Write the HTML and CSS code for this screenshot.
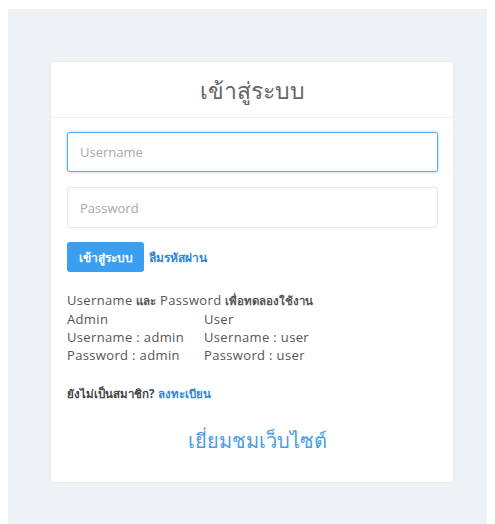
FILE: index.html
```html
<!DOCTYPE html>
<html lang="th">
<head>
<meta charset="utf-8">
<title>เข้าสู่ระบบ</title>
<link rel="stylesheet" href="styles.css">
</head>
<body>
<div class="page">
  <div class="card">
    <div class="card-header">เข้าสู่ระบบ</div>
    <div class="card-body">
      <input class="field focused" type="text" placeholder="Username">
      <input class="field" type="password" placeholder="Password">
      <div class="actions">
        <button class="btn" type="button">เข้าสู่ระบบ</button>
        <a class="link strong" href="#">ลืมรหัสผ่าน</a>
      </div>
      <div class="demo">
        <div class="demo-title">Username <b>และ</b> Password <b>เพื่อทดลองใช้งาน</b></div>
        <div class="demo-grid">
          <span>Admin</span><span>User</span>
          <span>Username : admin</span><span>Username : user</span>
          <span>Password : admin</span><span>Password : user</span>
        </div>
      </div>
      <div class="register"><b>ยังไม่เป็นสมาชิก?</b> <a class="link" href="#">ลงทะเบียน</a></div>
      <div class="visit"><a href="#">เยี่ยมชมเว็บไซต์</a></div>
    </div>
  </div>
</div>
</body>
</html>
```
FILE: styles.css
```css
html, body {
  margin: 0;
  padding: 0;
  background: #ffffff;
}

body {
  padding: 9px 8px 0 8px;
  font-family: "Open Sans", "DejaVu Sans", sans-serif;
  color: #555;
}

.page {
  background: #eff2f5;
  min-height: 515px;
  padding: 53px 0 0 43px;
  box-sizing: border-box;
}

.card {
  width: 402px;
  background: #fff;
  border-radius: 3px;
  box-shadow: 0 0 3px rgba(0, 0, 0, 0.06);
}

.card-header {
  height: 56px;
  border-bottom: 1px solid #eceef0;
  display: flex;
  align-items: center;
  justify-content: center;
  font-family: "Liberation Serif", serif;
  font-size: 23px;
  color: #666;
  padding-top: 2px;
  box-sizing: border-box;
}

.card-body {
  padding: 14px 15px 0 16px;
  display: flex;
  flex-direction: column;
}

.field {
  display: block;
  width: 100%;
  height: 41px;
  box-sizing: border-box;
  border: 1px solid #e3e6ea;
  border-radius: 3px;
  padding: 0 12px;
  font-family: "Open Sans", sans-serif;
  font-size: 13px;
  color: #555;
  background: #fff;
  outline: none;
}

.field::placeholder {
  color: #a9a9a9;
}

.field.focused {
  border: 1px solid #5aa8ef;
  box-shadow: 0 0 3px rgba(80, 160, 235, 0.55);
  height: 40px;
  margin-bottom: 15px;
}

.actions {
  display: flex;
  align-items: center;
  gap: 5px;
  margin-top: 14px;
}

.btn {
  width: 77px;
  height: 30px;
  border: 0;
  border-radius: 3px;
  background: #3a9ff0;
  color: #fff;
  font-family: "Liberation Sans", sans-serif;
  font-weight: bold;
  font-size: 12px;
  padding: 0;
}

.link {
  color: #2f86d6;
  text-decoration: none;
  font-size: 12px;
}

.link.strong {
  font-weight: bold;
}

.demo {
  margin-top: 19px;
  font-size: 13px;
  letter-spacing: 0.35px;
  line-height: 18px;
  color: #555;
}

.demo b {
  font-size: 11.5px;
  letter-spacing: 0;
}

.demo-grid {
  display: grid;
  grid-template-columns: 137px auto;
}

.register {
  margin-top: 21px;
  font-size: 11.5px;
  color: #444;
}

.register .link {
  font-weight: bold;
  font-size: 11.5px;
}

.visit {
  text-align: center;
  padding: 22px 0 25px 10px;
}

.visit a {
  font-family: "Liberation Serif", serif;
  font-size: 20px;
  color: #4a9de3;
  text-decoration: none;
}
```
